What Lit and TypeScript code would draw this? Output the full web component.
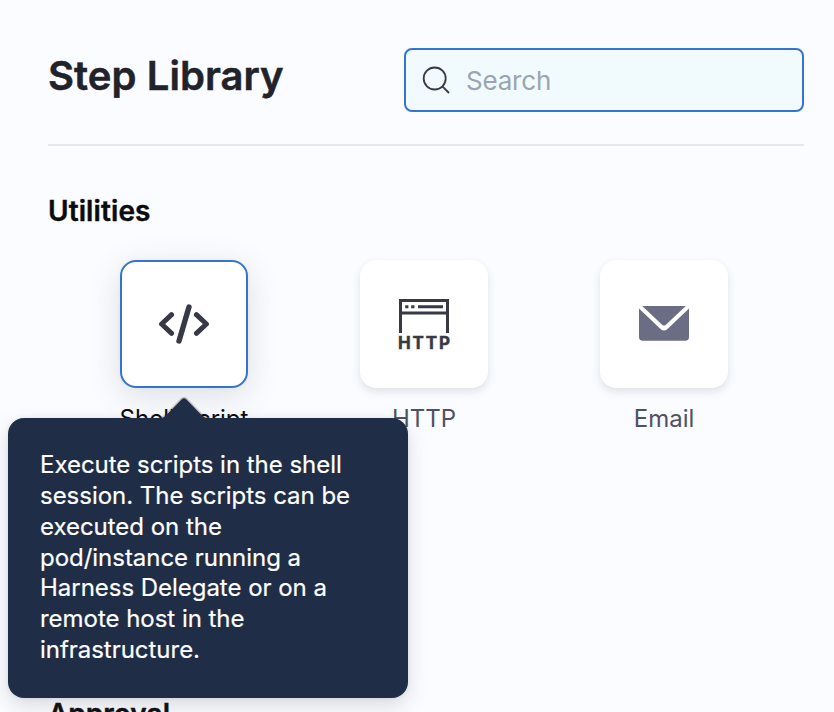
import { LitElement, html, css, svg, TemplateResult } from "lit";
import { customElement } from "lit/decorators.js";
import { classMap } from "lit/directives/class-map.js";

interface Step {
  name: string;
  icon: TemplateResult;
  active?: boolean;
}

const codeIcon = svg`<svg viewBox="0 0 50 50" width="50" height="50">
  <g fill="none" stroke="#383946" stroke-linecap="round" stroke-linejoin="round">
    <path d="M12.6 15.6 L2.6 25 L12.6 34.4" stroke-width="5"/>
    <path d="M37.4 15.6 L47.4 25 L37.4 34.4" stroke-width="5"/>
    <path d="M30 8 L20 42" stroke-width="5.4"/>
  </g></svg>`;

const httpIcon = svg`<svg class="http" viewBox="0 0 50 50" width="50" height="50">
  <path d="M1.5 34 V1.5 H48.5 V34" fill="none" stroke="#383946" stroke-width="3"/>
  <path d="M2 14 H48" stroke="#383946" stroke-width="2.8"/>
  <path d="M6.2 7.7 h3.2 M12.2 7.7 h3.2 M19 7.7 h25" stroke="#383946" stroke-width="3"/>
  <text x="-1" y="49.8" textLength="52" lengthAdjust="spacing" class="glyph">HTTP</text></svg>`;

const mailIcon = svg`<svg viewBox="0 0 50 50" width="50" height="50">
  <path d="M3.2 7 H46.8 L26.6 26 Q25 27.2 23.4 26 Z" fill="#6b6d85"/>
  <path d="M0 9.6 L21.5 30 Q25 33 28.5 30 L50 9.6 V38 Q50 41.8 46.2 41.8 H3.8 Q0 41.8 0 38 Z" fill="#6b6d85"/></svg>`;

@customElement("app-root")
export class AppRoot extends LitElement {
  static styles = css`
    :host {
      display: block;
      box-sizing: border-box;
      height: 712px;
      padding: 48px 30px 0 48px;
      overflow: hidden;
      background: #fbfcff;
      font-family: Inter, "Liberation Sans", sans-serif;
      color: #0b0b0d;
    }
    .head {
      display: flex;
      justify-content: space-between;
      height: 96px;
      border-bottom: 2px solid #e5e7eb;
    }
    h1 {
      margin: 0;
      font-size: 40px;
      line-height: 56px;
      font-weight: 600;
      letter-spacing: 0.06px;
      -webkit-text-stroke: 0.5px currentColor;
      color: #22222a;
    }
    .search {
      box-sizing: border-box;
      width: 400px;
      height: 64px;
      display: flex;
      align-items: center;
      gap: 15px;
      padding: 0 16px;
      border: 2px solid #3474d0;
      border-radius: 8px;
      background: #f1fbfe;
      color: #9aa5b1;
      font-size: 26px;
      letter-spacing: -0.2px;
    }
    svg {
      display: block;
    }
    .http {
      overflow: visible;
    }
    h2 {
      margin: 0;
      font-size: 28px;
      line-height: 34px;
      font-weight: 600;
      -webkit-text-stroke: 0.4px currentColor;
    }
    .utilities {
      margin-top: 48px;
      letter-spacing: 0.1px;
    }
    .steps {
      display: grid;
      grid-template-columns: repeat(3, 240px);
      margin: 32px 0 0 16px;
      height: 437px;
    }
    .step {
      display: flex;
      flex-direction: column;
      align-items: center;
      gap: 17px;
      font-size: 24px;
      line-height: 28px;
      color: #4f5162;
    }
    .card {
      position: relative;
      box-sizing: border-box;
      width: 128px;
      height: 128px;
      display: flex;
      align-items: center;
      justify-content: center;
      border-radius: 16px;
      background: #fff;
      box-shadow: 0 0 2px rgba(40, 41, 61, 0.04), 0 4px 8px rgba(96, 97, 112, 0.16);
    }
    .active {
      color: #0b0b0d;
    }
    .active .card {
      border: 2px solid #3474d0;
      box-shadow: 0 0 4px rgba(40, 41, 61, 0.04), 0 8px 32px rgba(96, 97, 112, 0.18);
    }
    .glyph {
      font: 700 17px Inter, "Liberation Sans", sans-serif;
      fill: #383946;
      stroke: #383946;
      stroke-width: 0.5px;
    }
    .tip {
      position: absolute;
      z-index: 1;
      left: -114px;
      top: 156px;
      box-sizing: border-box;
      width: 400px;
      height: 280px;
      padding: 32px;
      border-radius: 16px;
      background: #1f2d47;
      color: #fff;
      font-size: 24px;
      letter-spacing: -0.03px;
      line-height: 30.86px;
      white-space: nowrap;
      -webkit-text-stroke: 0.2px currentColor;
      box-shadow: 0 0 4px rgba(40, 41, 61, 0.08), 0 8px 20px rgba(96, 97, 112, 0.2);
    }
    .arrow {
      position: absolute;
      left: 154px;
      top: -22px;
      overflow: visible;
    }
  `;

  private steps: Step[] = [
    { name: "Shell Script", icon: codeIcon, active: true },
    { name: "HTTP", icon: httpIcon },
    { name: "Email", icon: mailIcon },
  ];

  private tooltip() {
    return html`<div class="tip">
      <svg class="arrow" width="44" height="24" viewBox="0 0 44 24">
        <path d="M-1 22.5 Q2 21.5 5 18.5 L19.5 3.5 Q22 1 24.5 3.5 L39 18.5 Q42 21.5 45 22.5" fill="#1f2d47" stroke="#10161a" stroke-opacity="0.2" stroke-width="3" paint-order="stroke"/>
        <path d="M-1 22 H45 V24 H-1 Z" fill="#1f2d47"/>
      </svg>
      Execute scripts in the shell<br />session. The scripts can be<br />executed on the<br />pod/instance running a<br />Harness Delegate or on a<br />remote host in the<br />infrastructure.
    </div>`;
  }

  render() {
    return html`
      <div class="head">
        <h1>Step Library</h1>
        <div class="search">
          <svg width="29" height="30" viewBox="0 0 29 30" fill="none" stroke="#383946" stroke-width="1.8">
            <circle cx="12.7" cy="13.5" r="11"/>
            <path d="M20.4 21.3 L27 28"/>
          </svg>
          <span>Search</span>
        </div>
      </div>
      <h2 class="utilities">Utilities</h2>
      <div class="steps">
        ${this.steps.map(
          (s) => html`<div class=${classMap({ step: true, active: !!s.active })}>
            <div class="card">${s.icon}${s.active ? this.tooltip() : ""}</div>
            <span>${s.name}</span>
          </div>`
        )}
      </div>
      <h2>Approval</h2>
    `;
  }
}
